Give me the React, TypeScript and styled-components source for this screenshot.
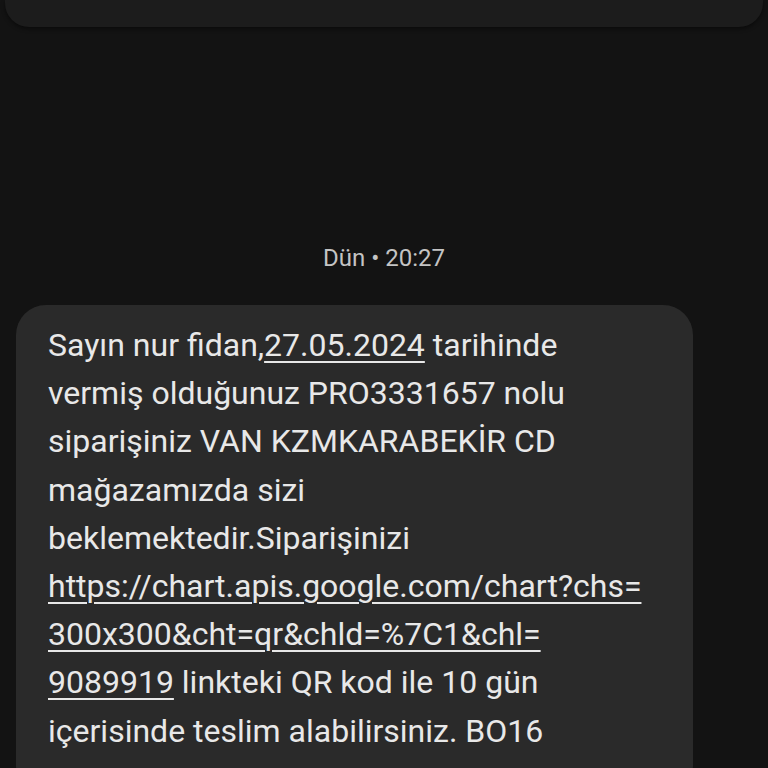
import React from 'react'
import styled, { createGlobalStyle } from 'styled-components'

const GlobalStyle = createGlobalStyle`
  html, body {
    margin: 0;
    padding: 0;
    background: #131313;
    overflow: hidden;
  }
  body {
    font-family: Roboto, "Open Sans", "Liberation Sans", sans-serif;
  }
`

const Screen = styled.div`
  width: 768px;
  height: 768px;
  display: flex;
  flex-direction: column;
  background: #131313;
  overflow: hidden;

  & > * {
    flex-shrink: 0;
  }
`

const PrevBubble = styled.div`
  height: 27px;
  margin: 0 5px;
  background: #1c1c1c;
  border-radius: 0 0 24px 24px;
  box-shadow: 0 2px 4px rgba(0, 0, 0, 0.45);
`

const Stamp = styled.div`
  margin-top: 215px;
  text-align: center;
  font-size: 24px;
  line-height: 32px;
  color: #c4c4c4;
`

const Bubble = styled.div`
  margin: 31px 0 0 16px;
  width: 677px;
  padding: 16px 0 40px 32px;
  box-sizing: border-box;
  background: #2a2a2a;
  border-radius: 30px;
  color: #e8e8e8;
  font-size: 32px;
  line-height: 48.2px;
`

const Line = styled.div`
  white-space: nowrap;
`

const Link = styled.span`
  text-decoration: underline;
  text-decoration-thickness: 2px;
  text-underline-offset: 5px;
`

export default function App() {
  return (
    <>
      <GlobalStyle />
      <Screen>
        <PrevBubble />
        <Stamp>Dün • 20:27</Stamp>
        <Bubble>
          <Line>
            Sayın nur fidan,<Link>27.05.2024</Link> tarihinde
          </Line>
          <Line>vermiş olduğunuz PRO3331657 nolu</Line>
          <Line>siparişiniz VAN KZMKARABEKİR CD</Line>
          <Line>mağazamızda sizi</Line>
          <Line>beklemektedir.Siparişinizi</Line>
          <Line>
            <Link>https://chart.apis.google.com/chart?chs=</Link>
          </Line>
          <Line>
            <Link>300x300&amp;cht=qr&amp;chld=%7C1&amp;chl=</Link>
          </Line>
          <Line>
            <Link>9089919</Link> linkteki QR kod ile 10 gün
          </Line>
          <Line>içerisinde teslim alabilirsiniz. BO16</Line>
        </Bubble>
      </Screen>
    </>
  )
}
